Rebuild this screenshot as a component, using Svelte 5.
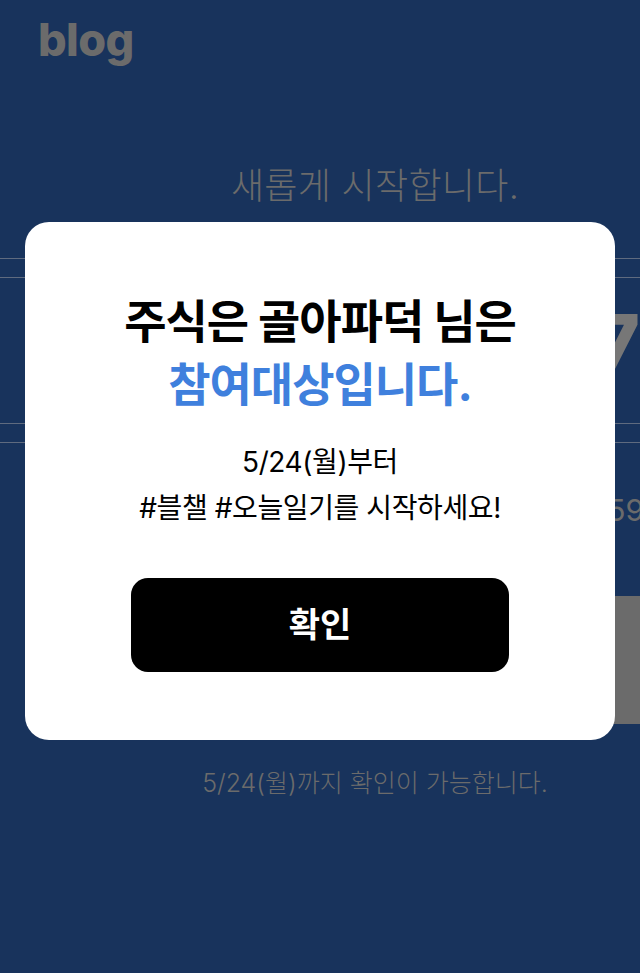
<script lang="ts">
  const title = '주식은 골아파덕 님은';
  const highlight = '참여대상입니다.';
</script>

<div class="page">
  <header class="logo">blog</header>

  <!-- the page behind the modal is wider than the window and gets clipped on the right -->
  <div class="content">
    <p class="intro">새롭게 시작합니다.</p>

    <section class="stamp">
      <div class="rules"></div>
      <div class="stamp-body"><span class="stamp-char">7</span></div>
      <div class="rules"></div>
    </section>

    <p class="period">59</p>

    <div class="check-btn"></div>

    <p class="note">5/24(월)까지 확인이 가능합니다.</p>
  </div>

  <div class="overlay">
    <div class="modal">
      <h2 class="modal-title">{title}<br /><em>{highlight}</em></h2>
      <p class="modal-text">5/24(월)부터<br />#블챌 #오늘일기를 시작하세요!</p>
      <button class="confirm"><span>확인</span></button>
    </div>
  </div>
</div>

<style>
  :global(body) {
    margin: 0;
    background: #18335c;
  }

  .page {
    position: relative;
    height: 973px;
    overflow: hidden;
    background: #18335c;
    color: #6b6b6b;
    font-family: Inter, 'Noto Sans CJK KR', sans-serif;
  }

  .logo {
    padding: 12px 0 0 38px;
    height: 60px;
    box-sizing: border-box;
    font-size: 45px;
    line-height: 56px;
    font-weight: 800;
    letter-spacing: -0.6px;
  }

  .content {
    width: 750px;
  }

  .intro {
    margin: 101px 0 0;
    text-align: center;
    font-size: 36px;
    line-height: 50px;
    font-weight: 300;
    letter-spacing: 0.3px;
  }

  .stamp {
    margin-top: 47px;
  }

  .rules {
    height: 18px;
    border-top: 1px solid #5f6b7f;
    border-bottom: 1px solid #5f6b7f;
  }

  .stamp-body {
    height: 145px;
    box-sizing: border-box;
    display: flex;
    justify-content: flex-end;
    align-items: center;
    padding: 0 110px 20px 0;
  }

  .stamp-char {
    font-size: 76px;
    line-height: 1;
    font-weight: 800;
    color: #777;
  }

  .period {
    margin: 47px 0 0;
    text-align: right;
    padding-right: 106px;
    font-size: 30px;
    line-height: 40px;
  }

  .check-btn {
    margin: 66px 60px 0;
    height: 128px;
    background: #6b6b6b;
  }

  .note {
    margin: 43px 0 0;
    text-align: center;
    font-size: 25px;
    line-height: 32px;
    font-weight: 300;
  }

  .overlay {
    position: absolute;
    top: 222px;
    left: 25px;
    width: 590px;
  }

  .modal {
    background: #fff;
    border-radius: 24px;
    height: 518px;
    box-sizing: border-box;
    padding-top: 68px;
    display: flex;
    flex-direction: column;
    align-items: center;
    text-align: center;
  }

  .modal-title {
    margin: 0;
    color: #000;
    font-size: 46px;
    line-height: 63px;
    font-weight: 700;
    letter-spacing: -1px;
  }

  .modal-title em {
    font-style: normal;
    color: #3f80dd;
  }

  .modal-text {
    margin: 23px 0 0;
    color: #000;
    font-size: 28px;
    line-height: 46px;
    letter-spacing: -0.4px;
  }

  .confirm {
    margin-top: 47px;
    width: 378px;
    height: 94px;
    padding: 0 0 5px;
    border: none;
    border-radius: 17px;
    background: #000;
    color: #fff;
    font-family: inherit;
    font-size: 34px;
    font-weight: 700;
  }
</style>
